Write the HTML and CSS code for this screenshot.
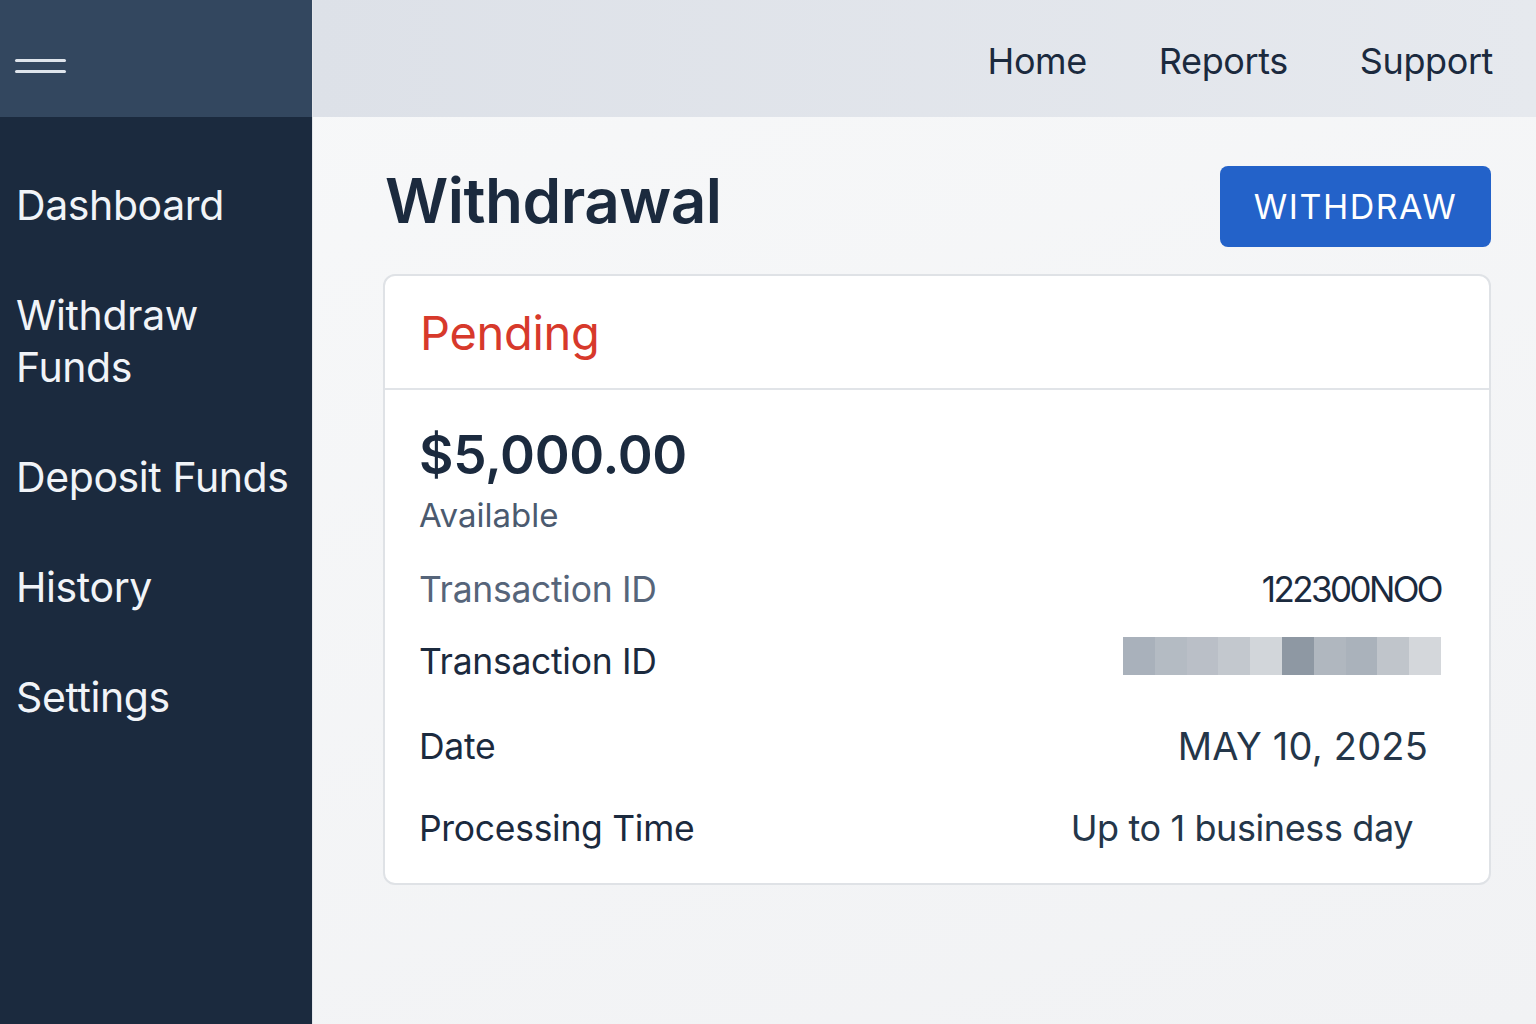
FILE: index.html
```html
<!DOCTYPE html>
<html lang="en">
<head>
  <meta charset="UTF-8" />
  <meta name="viewport" content="width=device-width, initial-scale=1.0"/>
  <title>Withdrawal</title>
  <link rel="stylesheet" href="styles.css">
</head>
<body>
  <div class="layout">
    <!-- Sidebar -->
    <aside class="sidebar">
      <div class="sidebar-top">
        <span class="burger"></span>
        <span class="burger"></span>
      </div>
      <nav class="side-nav">
        <a>Dashboard</a>
        <a>Withdraw<br>Funds</a>
        <a>Deposit Funds</a>
        <a>History</a>
        <a>Settings</a>
      </nav>
    </aside>

    <div class="main">
      <!-- Top bar -->
      <header class="topbar">
        <a>Home</a>
        <a>Reports</a>
        <a>Support</a>
      </header>

      <section class="content">
        <div class="title-row">
          <h1>Withdrawal</h1>
          <button class="withdraw-btn">WITHDRAW</button>
        </div>

        <div class="card">
          <div class="card-head">
            <h2 class="status">Pending</h2>
          </div>
          <div class="card-body">
            <div class="amount">$5,000.00</div>
            <div class="available">Available</div>

            <div class="row row-id">
              <span class="label muted">Transaction ID</span>
              <span class="value tx-code">122300NOO</span>
            </div>
            <div class="row row-ref">
              <span class="label">Transaction ID</span>
              <span class="redacted"></span>
            </div>
            <div class="row row-date">
              <span class="label">Date</span>
              <span class="value date">MAY 10, 2025</span>
            </div>
            <div class="row row-time">
              <span class="label">Processing Time</span>
              <span class="value time">Up to 1 business day</span>
            </div>
          </div>
        </div>
      </section>
    </div>
  </div>
</body>
</html>
```

FILE: styles.css
```css
* {
  box-sizing: border-box;
}

body {
  margin: 0;
  font-family: Inter, "Noto Sans", Arial, sans-serif;
  color: #1b2a3e;
  height: 1024px;
  overflow: hidden;
}

.layout {
  display: grid;
  grid-template-columns: 312px 1fr;
  height: 1024px;
}

/* Sidebar */
.sidebar {
  background: #1b2a3e;
  display: flex;
  flex-direction: column;
}

.sidebar-top {
  height: 117px;
  background: #33475f;
  display: flex;
  flex-direction: column;
  justify-content: center;
  gap: 8px;
  padding: 14px 0 0 15px;
}

.burger {
  display: block;
  width: 51px;
  height: 3px;
  background: #dfe5ec;
  border-radius: 2px;
}

.side-nav {
  display: flex;
  flex-direction: column;
  gap: 58px;
  padding: 62px 0 0 16px;
}

.side-nav a {
  color: #f1f4f8;
  font-size: 41px;
  line-height: 52px;
  letter-spacing: -0.4px;
}

/* Main */
.main {
  display: flex;
  flex-direction: column;
  background: linear-gradient(160deg, #f7f8f9 0%, #f1f2f4 100%);
  border-left: 1px solid #e3e6ea;
}

.topbar {
  height: 117px;
  background: linear-gradient(90deg, #dde1e8 0%, #e6e9ee 100%);
  display: flex;
  justify-content: flex-end;
  align-items: center;
  gap: 72px;
  padding: 4px 43px 0 0;
}

.topbar a {
  font-size: 36px;
  color: #1b2a3e;
  letter-spacing: -0.4px;
}

.content {
  padding: 49px 45px 0 70px;
}

.title-row {
  display: flex;
  justify-content: space-between;
  align-items: center;
  height: 81px;
  margin-bottom: 27px;
}

.title-row h1 {
  margin: 0 0 12px 2px;
  font-size: 62px;
  font-weight: 600;
  letter-spacing: -0.5px;
}

.withdraw-btn {
  width: 271px;
  height: 81px;
  background: #2362c9;
  color: #fff;
  border: none;
  border-radius: 8px;
  font-family: inherit;
  font-size: 34px;
  letter-spacing: 1.5px;
  cursor: pointer;
}

/* Card */
.card {
  background: #fff;
  border: 2px solid #dfe2e6;
  border-radius: 12px;
  height: 611px;
}

.card-head {
  height: 114px;
  display: flex;
  align-items: center;
  padding-left: 35px;
  border-bottom: 2px solid #e1e4e8;
}

.status {
  margin: 0;
  color: #d7392b;
  font-size: 47px;
  font-weight: 400;
  letter-spacing: -0.3px;
}

.card-body {
  padding: 30px 48px 0 34px;
}

.amount {
  font-size: 53px;
  line-height: 70px;
  font-weight: 600;
  letter-spacing: -0.3px;
}

.available {
  margin-top: 5px;
  font-size: 33px;
  line-height: 40px;
  color: #4b5a6f;
}

.row {
  display: flex;
  justify-content: space-between;
  align-items: center;
  height: 48px;
}

.label {
  font-size: 35.5px;
  color: #1b2a3e;
  letter-spacing: -0.3px;
}

.label.muted {
  color: #56657a;
}

.value {
  color: #243649;
}

.row-id {
  margin-top: 30px;
}

.row-ref {
  margin-top: 24px;
}

.row-date {
  margin-top: 37px;
}

.row-time {
  margin-top: 34px;
}

.tx-code {
  font-size: 35px;
  letter-spacing: -2.6px;
  color: #1b2a3e;
}

.redacted {
  align-self: flex-start;
  width: 318px;
  height: 38px;
  background: linear-gradient(90deg,
    #a9b1bb 0 10%, #b4bbc3 10% 20%, #babfc7 20% 30%, #c3c8ce 30% 40%,
    #d2d6da 40% 50%, #8e98a3 50% 60%, #b0b7bf 60% 70%, #aab2bb 70% 80%,
    #c0c5cb 80% 90%, #d4d7db 90% 100%);
}

.date {
  font-size: 38px;
  margin-right: 13px;
  letter-spacing: 0.2px;
}

.time {
  font-size: 36px;
  margin-right: 28px;
  letter-spacing: -0.4px;
}
```
